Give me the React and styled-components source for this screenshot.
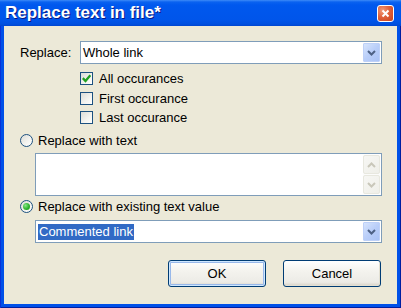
import React from "react";
import styled, { createGlobalStyle } from "styled-components";

const Global = createGlobalStyle`
  html, body { margin: 0; padding: 0; background: #ffffff; }
  body { font-family: "Liberation Sans", Arial, sans-serif; }
`;

const Window = styled.div`
  width: 401px;
  height: 308px;
  display: flex;
  flex-direction: column;
  background: #0050e8;
  box-sizing: border-box;
  box-shadow: inset 1px 0 #0831d9, inset -1px 0 #001ea0, inset 0 -1px #001ea0;
`;

const TitleBar = styled.div`
  height: 26px;
  flex: none;
  display: flex;
  align-items: center;
  justify-content: space-between;
  padding: 0 7px 0 5px;
  background: linear-gradient(
    to bottom,
    #3d8bf7 0px,
    #0a62f0 2px,
    #0058ee 5px,
    #0055ea 20px,
    #0050e0 24px,
    #0046d0 26px
  );
`;

const Title = styled.span`
  color: #ffffff;
  font-weight: bold;
  font-size: 17px;
  text-shadow: 1px 1px #0a1882;
`;

const CloseButton = styled.div`
  width: 15px;
  height: 15px;
  border: 1px solid #ffffff;
  border-radius: 3px;
  background: radial-gradient(circle at 30% 30%, #f09a7a 0%, #e0623c 45%, #c8401c 100%);
  display: flex;
  align-items: center;
  justify-content: center;
`;

const Body = styled.div`
  flex: 1;
  margin: 0 4px 4px 4px;
  background: #ece9d8;
  padding: 15px 15px 0 16px;
  display: flex;
  flex-direction: column;
  font-size: 13px;
  color: #000;
`;

const Row = styled.div`
  display: flex;
  align-items: center;
`;

const Label = styled.span`
  width: 60px;
  flex: none;
`;

const Combo = styled.div`
  flex: ${(p) => (p.$indent ? "none" : 1)};
  height: 23px;
  box-sizing: border-box;
  border: 1px solid #7f9db9;
  background: #fff;
  display: flex;
  align-items: center;
  padding: 0 1px 0 2px;
  margin-left: ${(p) => p.$indent || 0}px;
  margin-top: ${(p) => p.$top || 0}px;
`;

const ComboText = styled.span`
  flex: 1;
  display: flex;
  align-items: center;
`;

const Selected = styled.span`
  background: #316ac5;
  color: #fff;
  padding: 1px;
  line-height: 14px;
`;

const DropButton = styled.div`
  width: 17px;
  height: 19px;
  box-sizing: border-box;
  border: 1px solid #bdd0f8;
  border-radius: 1px;
  background: linear-gradient(135deg, #d6e4fd 0%, #b9cef9 50%, #aac3f6 100%);
  display: flex;
  align-items: center;
  justify-content: center;
`;

const Checks = styled.div`
  display: flex;
  flex-direction: column;
  gap: 6.5px;
  padding-left: 60px;
  margin-top: 8px;
`;

const OptionRow = styled.label`
  display: flex;
  align-items: center;
  height: 13px;
  gap: ${(p) => p.$gap || 6}px;
  margin-top: ${(p) => p.$top || 0}px;
  line-height: 13px;
`;

const CheckBox = styled.span`
  width: 13px;
  height: 13px;
  box-sizing: border-box;
  border: 1px solid #1c5180;
  background: linear-gradient(135deg, #dcdcd7 0%, #f4f4f0 60%, #ffffff 100%);
  display: flex;
  align-items: center;
  justify-content: center;
  flex: none;
`;

const Radio = styled.span`
  width: 13px;
  height: 13px;
  box-sizing: border-box;
  border-radius: 50%;
  border: 1px solid #1c5180;
  background: linear-gradient(135deg, #dcdcd7 0%, #f4f4f0 60%, #ffffff 100%);
  display: flex;
  align-items: center;
  justify-content: center;
  flex: none;
`;

const RadioDot = styled.span`
  width: 7px;
  height: 7px;
  border-radius: 50%;
  background: radial-gradient(circle at 35% 35%, #8ae68a 0%, #2fb52f 55%, #168a16 100%);
`;

const TextArea = styled.div`
  margin: 6px 0 0 15px;
  height: 43px;
  box-sizing: border-box;
  border: 1px solid #7f9db9;
  background: #fff;
  display: flex;
  justify-content: flex-end;
  padding: 1px;
`;

const ScrollBar = styled.div`
  width: 17px;
  display: flex;
  flex-direction: column;
  justify-content: space-between;
  background: #fcfcfb;
`;

const ScrollButton = styled.div`
  height: 19px;
  box-sizing: border-box;
  border: 1px solid #e8e8df;
  border-radius: 2px;
  background: linear-gradient(135deg, #f7f7f4 0%, #efefe9 100%);
  display: flex;
  align-items: center;
  justify-content: center;
`;

const Buttons = styled.div`
  display: flex;
  justify-content: flex-end;
  gap: 17px;
  margin-top: 17px;
  padding-right: 1px;
`;

const Button = styled.div`
  width: 98px;
  height: 27px;
  box-sizing: border-box;
  border: 1px solid #003c74;
  border-radius: 3px;
  background: linear-gradient(to bottom, #ffffff 0%, #f4f3ee 40%, #ecebe6 85%, #d6d0c5 100%);
  display: flex;
  align-items: center;
  justify-content: center;
  font-size: 13px;
  box-shadow: ${(p) =>
    p.$default
      ? "inset 0 0 0 1px #cee7ff, inset 0 0 0 2px #98b8ea"
      : "inset -1px -1px 0 #e3e0d2"};
`;

const Chevron = ({ color = "#4d6185", down = true }) => (
  <svg width="9" height="6" viewBox="0 0 9 6">
    <path
      d={down ? "M1 1 L4.5 4.5 L8 1" : "M1 5 L4.5 1.5 L8 5"}
      fill="none"
      stroke={color}
      strokeWidth="2"
    />
  </svg>
);

export default function App() {
  return (
    <>
      <Global />
      <Window>
        <TitleBar>
          <Title>Replace text in file*</Title>
          <CloseButton>
            <svg width="9" height="9" viewBox="0 0 9 9">
              <path d="M1.5 1.5 L7.5 7.5 M7.5 1.5 L1.5 7.5" stroke="#fff" strokeWidth="2" />
            </svg>
          </CloseButton>
        </TitleBar>
        <Body>
          <Row>
            <Label>Replace:</Label>
            <Combo>
              <ComboText>Whole link</ComboText>
              <DropButton>
                <Chevron />
              </DropButton>
            </Combo>
          </Row>
          <Checks>
            <OptionRow>
              <CheckBox>
                <svg width="9" height="9" viewBox="0 0 9 9">
                  <path d="M0.8 4.2 L3.5 7 L8.4 1.2" fill="none" stroke="#21a121" strokeWidth="2.4" />
                </svg>
              </CheckBox>
              All occurances
            </OptionRow>
            <OptionRow>
              <CheckBox />
              First occurance
            </OptionRow>
            <OptionRow>
              <CheckBox />
              Last occurance
            </OptionRow>
          </Checks>
          <OptionRow $top={10} $gap={5}>
            <Radio />
            Replace with text
          </OptionRow>
          <TextArea>
            <ScrollBar>
              <ScrollButton>
                <Chevron color="#c9c7ba" down={false} />
              </ScrollButton>
              <ScrollButton>
                <Chevron color="#c9c7ba" />
              </ScrollButton>
            </ScrollBar>
          </TextArea>
          <OptionRow $top={4} $gap={5}>
            <Radio>
              <RadioDot />
            </Radio>
            Replace with existing text value
          </OptionRow>
          <Combo $indent={15} $top={7}>
            <ComboText>
              <Selected>Commented link</Selected>
            </ComboText>
            <DropButton>
              <Chevron />
            </DropButton>
          </Combo>
          <Buttons>
            <Button $default>OK</Button>
            <Button>Cancel</Button>
          </Buttons>
        </Body>
      </Window>
    </>
  );
}
